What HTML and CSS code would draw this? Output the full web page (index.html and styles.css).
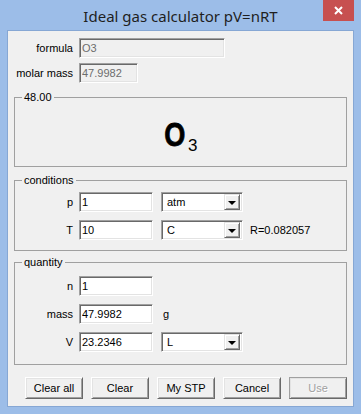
FILE: index.html
```html
<!DOCTYPE html>
<html lang="en">
<head>
    <meta charset="UTF-8">
    <title>Ideal gas calculator pV=nRT</title>
    <link rel="stylesheet" href="styles.css">
</head>
<body>
    <div class="window">
        <div class="titlebar">
            <span class="title">Ideal gas calculator pV=nRT</span>
            <button class="close" aria-label="Close">
                <svg width="9" height="9" viewBox="0 0 9 9"><path d="M1 1 L8 8 M8 1 L1 8" stroke="#fff" stroke-width="2"/></svg>
            </button>
        </div>
        <div class="client">
            <div class="top-row">
                <label class="lbl lbl-top">formula</label>
                <input class="edit edit-off edit-formula" value="O3" readonly>
            </div>
            <div class="top-row">
                <label class="lbl lbl-top">molar mass</label>
                <input class="edit edit-off edit-molar" value="47.9982" readonly>
            </div>

            <fieldset class="group group-formula">
                <legend>48.00</legend>
                <div class="formula-view">
                    <span class="formula-text"><span class="element">O</span><sub>3</sub></span>
                </div>
            </fieldset>

            <fieldset class="group group-conditions">
                <legend>conditions</legend>
                <div class="grow">
                    <label class="lbl">p</label>
                    <input class="edit" value="1">
                    <div class="combo"><span>atm</span><span class="drop"></span></div>
                </div>
                <div class="grow">
                    <label class="lbl">T</label>
                    <input class="edit" value="10">
                    <div class="combo"><span>C</span><span class="drop"></span></div>
                    <span class="note">R=0.082057</span>
                </div>
            </fieldset>

            <fieldset class="group group-quantity">
                <legend>quantity</legend>
                <div class="grow">
                    <label class="lbl">n</label>
                    <input class="edit" value="1">
                </div>
                <div class="grow">
                    <label class="lbl">mass</label>
                    <input class="edit" value="47.9982">
                    <span class="unit">g</span>
                </div>
                <div class="grow">
                    <label class="lbl">V</label>
                    <input class="edit" value="23.2346">
                    <div class="combo"><span>L</span><span class="drop"></span></div>
                </div>
            </fieldset>

            <div class="buttons">
                <button class="btn">Clear all</button>
                <button class="btn">Clear</button>
                <button class="btn">My STP</button>
                <button class="btn">Cancel</button>
                <button class="btn btn-default" disabled>Use</button>
            </div>
        </div>
    </div>
</body>
</html>
```

FILE: styles.css
```css
* {
    box-sizing: border-box;
}
body {
    margin: 0;
    font-family: "Liberation Sans", Arial, sans-serif;
    font-size: 11px;
    color: #000;
}
.window {
    width: 361px;
    height: 414px;
    background: #9cbde8;
    padding: 0 7px 7px;
    display: flex;
    flex-direction: column;
}
.titlebar {
    height: 30px;
    position: relative;
    display: flex;
    align-items: center;
    justify-content: center;
}
.title {
    font-family: "Noto Sans", "Open Sans", sans-serif;
    font-size: 15px;
    color: #1f1f1f;
    margin-top: 1px;
}
.close {
    position: absolute;
    top: 0;
    right: 0;
    width: 31px;
    height: 21px;
    background: #c75050;
    border: 0;
    padding: 0;
    display: flex;
    align-items: center;
    justify-content: center;
}
.client {
    flex: 1;
    background: #f0f0f0;
    border: 1px solid #86a7d4;
    padding-top: 7px;
    display: flex;
    flex-direction: column;
}

/* label + edit rows */
.top-row, .grow {
    display: flex;
    align-items: center;
    height: 20px;
}
.top-row + .top-row {
    margin-top: 5px;
}
.grow + .grow {
    margin-top: 8px;
}
.lbl {
    text-align: right;
    white-space: nowrap;
    width: 58px;
    margin-right: 6px;
}
.lbl-top {
    width: 65px;
}
.edit {
    font: inherit;
    height: 20px;
    width: 74px;
    padding: 0 2px;
    background: #fff;
    border: 1px solid;
    border-color: #a0a0a0 #fff #fff #a0a0a0;
    box-shadow: inset 1px 1px #696969, inset -1px -1px #e3e3e3;
    outline: none;
}
.edit-off {
    background: #f0f0f0;
    color: #6d6d6d;
}
.edit-formula {
    width: 146px;
}
.edit-molar {
    width: 59px;
}
.combo {
    width: 82px;
    height: 20px;
    margin-left: 8px;
    padding: 2px 2px 2px 5px;
    background: #fff;
    border: 1px solid;
    border-color: #a0a0a0 #fff #fff #a0a0a0;
    box-shadow: inset 1px 1px #696969, inset -1px -1px #e3e3e3;
    display: flex;
    align-items: center;
}
.drop {
    margin-left: auto;
    width: 16px;
    height: 16px;
    background: #f0f0f0;
    border: 1px solid;
    border-color: #e3e3e3 #696969 #696969 #e3e3e3;
    box-shadow: inset 1px 1px #fff, inset -1px -1px #a0a0a0;
    display: flex;
    align-items: center;
    justify-content: center;
}
.drop::after {
    content: "";
    border-left: 4px solid transparent;
    border-right: 4px solid transparent;
    border-top: 4px solid #000;
    margin-top: 1px;
}
.note {
    margin-left: 7px;
}
.unit {
    margin-left: 10px;
}

/* group boxes */
.group {
    margin: 0 6px;
    padding: 0;
    min-width: 0;
    border: 1px solid #a0a0a0;
}
.group legend {
    margin-left: 7px;
    padding: 0 2px;
    line-height: 14px;
}
.group-formula {
    margin-top: 7px;
}
.formula-view {
    height: 62px;
    display: flex;
    align-items: center;
    justify-content: center;
    padding-left: 2px;
    padding-top: 2px;
}
.formula-text {
    font-weight: bold;
    font-size: 33px;
    line-height: 34px;
    white-space: nowrap;
}
.formula-text .element {
    display: inline-block;
    transform: scaleX(0.82);
    margin: 0 -3px;
    -webkit-text-stroke: 0.8px #000;
}
.formula-text sub {
    font-weight: normal;
    font-size: 17px;
    line-height: 1;
    vertical-align: -5px;
    margin-left: 3px;
}
.group-conditions {
    margin-top: 6px;
    padding: 5px 0 10px;
}
.group-quantity {
    margin-top: 4px;
    padding: 7px 0 12px;
}

/* bottom buttons */
.buttons {
    display: flex;
    gap: 8px;
    margin-top: 12px;
    padding-left: 17px;
}
.btn {
    font: inherit;
    width: 58px;
    height: 22px;
    padding: 0;
    color: #000;
    background: #f0f0f0;
    border: 1px solid;
    border-color: #fff #696969 #696969 #fff;
    box-shadow: inset 1px 1px #e3e3e3, inset -1px -1px #a0a0a0;
}
.btn:disabled {
    color: #a0a0a0;
    text-shadow: 1px 1px #fff;
}
.btn-default {
    border-color: #a0a0a0 #696969 #696969 #a0a0a0;
}
```
